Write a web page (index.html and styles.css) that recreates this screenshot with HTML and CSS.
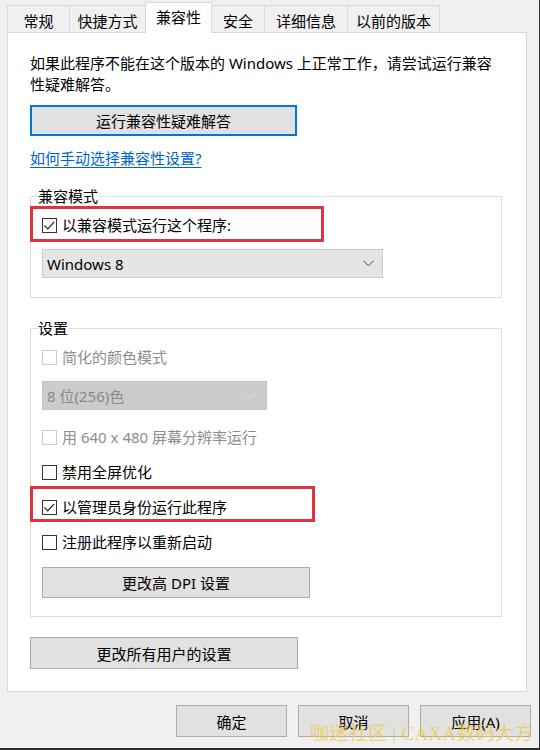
FILE: index.html
```html
<!DOCTYPE html>
<html lang="zh-CN">
<head>
<meta charset="utf-8">
<title>兼容性</title>
<link rel="stylesheet" href="styles.css">
</head>
<body>
<div class="window">
  <div class="tabs">
    <div class="tab t1">常规</div>
    <div class="tab t2">快捷方式</div>
    <div class="tab t3 active">兼容性</div>
    <div class="tab t4">安全</div>
    <div class="tab t5">详细信息</div>
    <div class="tab t6">以前的版本</div>
  </div>
  <div class="panel">
    <p class="intro">如果此程序不能在这个版本的 Windows 上正常工作，请尝试运行兼容性疑难解答。</p>
    <div class="btn btn-focus">运行兼容性疑难解答</div>
    <a class="link" href="#">如何手动选择兼容性设置?</a>

    <div class="group g1">
      <div class="legend">兼容模式</div>
      <div class="check-row first">
        <span class="box"><svg width="15" height="15" viewBox="0 0 15 15"><path d="M2.5 7.5 L5.8 10.8 L12.2 3.8" fill="none" stroke="#222" stroke-width="1.2"/></svg></span>
        <span>以兼容模式运行这个程序:</span>
      </div>
      <div class="select">
        <span>Windows 8</span>
        <svg width="11" height="7" viewBox="0 0 11 7"><path d="M0.5 0.8 L5.5 5.8 L10.5 0.8" fill="none" stroke="#444" stroke-width="1"/></svg>
      </div>
    </div>

    <div class="group g2">
      <div class="legend">设置</div>
      <div class="check-row first disabled">
        <span class="box"></span>
        <span>简化的颜色模式</span>
      </div>
      <div class="select select-disabled">
        <span>8 位(256)色</span>
        <svg width="11" height="7" viewBox="0 0 11 7"><path d="M0.5 0.8 L5.5 5.8 L10.5 0.8" fill="none" stroke="#e2e2e2" stroke-width="1"/></svg>
      </div>
      <div class="check-row r640 disabled">
        <span class="box"></span>
        <span>用 640 x 480 屏幕分辨率运行</span>
      </div>
      <div class="check-row">
        <span class="box"></span>
        <span>禁用全屏优化</span>
      </div>
      <div class="check-row">
        <span class="box"><svg width="15" height="15" viewBox="0 0 15 15"><path d="M2.5 7.5 L5.8 10.8 L12.2 3.8" fill="none" stroke="#222" stroke-width="1.2"/></svg></span>
        <span>以管理员身份运行此程序</span>
      </div>
      <div class="check-row">
        <span class="box"></span>
        <span>注册此程序以重新启动</span>
      </div>
      <div class="btn btn-dpi">更改高 DPI 设置</div>
    </div>

    <div class="btn btn-all">更改所有用户的设置</div>
  </div>

  <div class="footer">
    <div class="btn btn-foot">确定</div>
    <div class="btn btn-foot">取消</div>
    <div class="btn btn-foot">应用(A)</div>
  </div>

  <div class="mark mark1"></div>
  <div class="mark mark2"></div>
  <div class="watermark">咖迷社区 | CAXA数码大方</div>
</div>
</body>
</html>
```

FILE: styles.css
```css
* { box-sizing: border-box; }
html, body {
  margin: 0;
  padding: 0;
  background: #f0f0f0;
}
body {
  font-family: "Noto Sans", "Noto Sans CJK SC", sans-serif;
  font-size: 15px;
  color: #000;
}
.window {
  position: relative;
  width: 540px;
  height: 750px;
  background: #f0f0f0;
  border-right: 1px solid #2e2e2e;
  border-bottom: 2px solid #2e2e2e;
  overflow: hidden;
}

/* tabs */
.tabs {
  display: flex;
  align-items: flex-end;
  height: 32px;
  padding-left: 7px;
}
.tab {
  height: 27px;
  line-height: 27px;
  padding-top: 2px;
  text-align: center;
  background: #f0f0f0;
  border: 1px solid #d9d9d9;
  border-bottom: none;
  margin-right: -1px;
  white-space: nowrap;
  flex: none;
}
.t1 { width: 63px; }
.t2 { width: 77px; }
.t3 { width: 67px; }
.t4 { width: 54px; }
.t5 { width: 84px; }
.t6 { width: 93px; }
.tab.active {
  height: 31px;
  line-height: 27px;
  padding-top: 1px;
  background: #fff;
  position: relative;
  z-index: 2;
  margin-bottom: -1px;
}

/* panel */
.panel {
  margin-left: 7px;
  width: 520px;
  height: 660px;
  background: #fff;
  border: 1px solid #d9d9d9;
  padding: 20px 0 0 22px;
  display: flex;
  flex-direction: column;
  align-items: flex-start;
}
.intro {
  margin: 0;
  width: 470px;
  line-height: 21px;
}
.btn {
  display: flex;
  align-items: center;
  justify-content: center;
  background: #e1e1e1;
  border: 1px solid #adadad;
  white-space: nowrap;
}
.btn-focus {
  margin-top: 10px;
  width: 267px;
  height: 31px;
  border: 2px solid #0078d7;
}
.link {
  margin-top: 12px;
  line-height: 21px;
  color: #0066cc;
  text-decoration: underline;
  text-underline-offset: 3px;
}

/* group boxes */
.group {
  width: 472px;
  border: 1px solid #dcdcdc;
  padding: 0 0 0 11px;
  display: flex;
  flex-direction: column;
  align-items: flex-start;
}
.g1 {
  margin-top: 27px;
  height: 102px;
}
.g2 {
  margin-top: 30px;
  height: 289px;
}
.legend {
  margin-top: -11px;
  margin-left: -4px;
  padding: 0 1px 0 0;
  line-height: 21px;
  background: #fff;
}
.check-row {
  display: flex;
  align-items: center;
  gap: 5px;
  height: 21px;
  line-height: 21px;
  margin-top: 14px;
  white-space: nowrap;
}
.check-row.first { margin-top: 8px; }
.check-row.r640 { margin-top: 17px; }
.box {
  width: 15px;
  height: 15px;
  border: 1px solid #333;
  background: #fff;
  display: flex;
  align-items: center;
  justify-content: center;
  flex: none;
}
.box svg { display: block; margin: -1px; }
.disabled { color: #8d8d8d; }
.disabled .box { border-color: #cccccc; }

.select {
  margin-top: 13px;
  width: 341px;
  height: 29px;
  background: #e5e5e5;
  border: 1px solid #cccccc;
  display: flex;
  align-items: center;
  justify-content: space-between;
  padding: 0 8px 0 4px;
}
.select svg { display: block; }
.select-disabled {
  width: 225px;
  background: #cccccc;
  border-color: #c4c4c4;
  color: #888;
  padding-right: 10px;
}
.btn-dpi {
  margin-top: 14px;
  width: 268px;
  height: 31px;
}
.btn-all {
  margin-top: 20px;
  width: 268px;
  height: 32px;
}

/* footer */
.footer {
  display: flex;
  justify-content: flex-end;
  gap: 11px;
  padding-right: 8px;
  margin-top: 13px;
}
.btn-foot {
  width: 111px;
  height: 32px;
}

/* annotations (overlays) */
.mark {
  position: absolute;
  border: 3px solid #dc3540;
}
.mark1 { left: 30px; top: 206px; width: 294px; height: 36px; }
.mark2 { left: 30px; top: 486px; width: 285px; height: 36px; }
.watermark {
  position: absolute;
  left: 310px;
  top: 722px;
  font-family: "Liberation Serif", "Noto Sans CJK SC", serif;
  font-size: 19px;
  line-height: 24px;
  letter-spacing: 0.3px;
  color: rgba(242, 200, 60, 0.72);
  white-space: nowrap;
}
```
